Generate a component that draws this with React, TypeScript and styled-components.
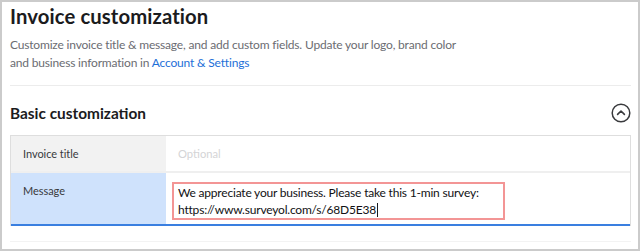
import React from "react";
import styled, { createGlobalStyle } from "styled-components";

const Global = createGlobalStyle`
  html, body { margin: 0; padding: 0; background: #ffffff; }
  body { font-family: Lato, "Noto Sans", sans-serif; }
  * { box-sizing: border-box; }
`;

const Frame = styled.div`
  width: 640px;
  height: 251px;
  border: 2px solid #cbcbcb;
  padding: 0 7px 0 8px;
  background: #ffffff;
  display: flex;
  flex-direction: column;
`;

const Title = styled.h1`
  margin: 2px 0 0 0;
  font-size: 20.3px;
  line-height: 24px;
  font-weight: 700;
  color: #1b1b1d;
  letter-spacing: 0.1px;
`;

const Desc = styled.p`
  margin: 8px 0 0 0;
  font-size: 12px;
  line-height: 17.5px;
  color: #6b6c72;
  letter-spacing: -0.18px;
  width: 470px;
`;

const Link = styled.a`
  color: #1d6fd8;
  text-decoration: none;
`;

const Divider = styled.div<{ $color: string }>`
  height: 1px;
  background: ${(p) => p.$color};
`;

const SectionHeader = styled.div`
  display: flex;
  align-items: center;
  justify-content: space-between;
  height: 20px;
  margin: 17px 0 12px 0;
`;

const SectionTitle = styled.h2`
  margin: 0;
  font-size: 15.4px;
  line-height: 20px;
  font-weight: 700;
  color: #1b1b1d;
`;

const Table = styled.div`
  border: 1px solid #dedede;
  border-bottom: none;
  display: flex;
  flex-direction: column;
`;

const Row = styled.div<{ $active?: boolean }>`
  display: grid;
  grid-template-columns: 155px 1fr;
  height: ${(p) => (p.$active ? "53px" : "37px")};
  border-bottom: ${(p) => (p.$active ? "2px solid #3a7fe0" : "2px solid #efefef")};
`;

const Label = styled.div<{ $active?: boolean }>`
  background: ${(p) => (p.$active ? "#cfe2fc" : "#f2f2f2")};
  color: #393a3d;
  font-size: 11px;
  line-height: 17px;
  letter-spacing: -0.05px;
  padding: ${(p) => (p.$active ? "9px 0 0 12px" : "0 0 0 12px")};
  display: flex;
  align-items: ${(p) => (p.$active ? "flex-start" : "center")};
`;

const Cell = styled.div<{ $active?: boolean }>`
  background: #ffffff;
  display: flex;
  align-items: ${(p) => (p.$active ? "flex-start" : "center")};
  padding: ${(p) => (p.$active ? "9px 0 0 6px" : "0 0 0 12px")};
`;

const Placeholder = styled.span`
  color: #d4d4d6;
  font-size: 11.2px;
`;

const TextBox = styled.div`
  width: 333px;
  height: 38px;
  border: 2px solid #f39595;
  padding: 0 4px;
  font-size: 12px;
  line-height: 17px;
  letter-spacing: -0.2px;
  color: #111113;
  white-space: nowrap;
`;

const Caret = styled.span`
  display: inline-block;
  width: 1px;
  height: 14px;
  background: #1b1b1d;
  vertical-align: -3px;
  margin-left: 1px;
`;

const Footer = styled.div`
  margin-top: 15px;
`;

const ChevronCircle = () => (
  <svg width="20" height="20" viewBox="0 0 20 20" fill="none">
    <circle cx="10" cy="10" r="8.8" stroke="#393a3d" strokeWidth="1.5" />
    <path d="M6.6 11.4 L10 8 L13.4 11.4" stroke="#393a3d" strokeWidth="1.6" strokeLinecap="round" strokeLinejoin="round" />
  </svg>
);

export default function App() {
  return (
    <>
      <Global />
      <Frame>
        <Title>Invoice customization</Title>
        <Desc>
          Customize invoice title &amp; message, and add custom fields. Update your logo, brand color
          <br />
          and business information in <Link href="#">Account &amp; Settings</Link>
        </Desc>
        <Divider $color="#ececec" style={{ marginTop: 14 }} />
        <SectionHeader>
          <SectionTitle>Basic customization</SectionTitle>
          <ChevronCircle />
        </SectionHeader>
        <Table>
          <Row>
            <Label>Invoice title</Label>
            <Cell>
              <Placeholder>Optional</Placeholder>
            </Cell>
          </Row>
          <Row $active>
            <Label $active>Message</Label>
            <Cell $active>
              <TextBox>
                We appreciate your business. Please take this 1-min survey:
                <br />
                https://www.surveyol.com/s/68D5E38
                <Caret />
              </TextBox>
            </Cell>
          </Row>
        </Table>
        <Footer>
          <Divider $color="#f3f3f3" />
        </Footer>
      </Frame>
    </>
  );
}
